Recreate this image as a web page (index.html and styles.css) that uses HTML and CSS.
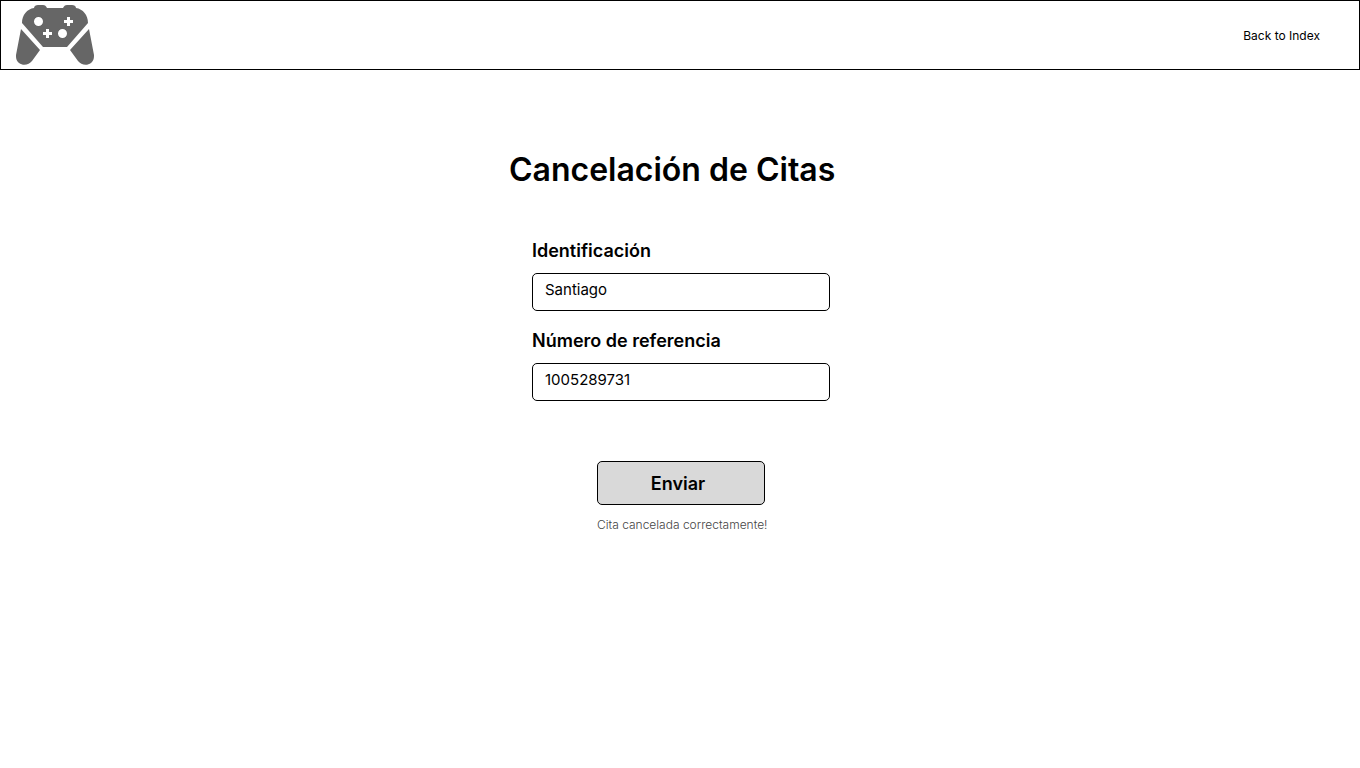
FILE: index.html
```html
<!DOCTYPE html>
<html lang="es">
<head>
<meta charset="utf-8">
<meta name="viewport" content="width=device-width, initial-scale=1">
<title>Cancelación de Citas</title>
<link rel="stylesheet" href="styles.css">
</head>
<body>
<header class="topbar">
  <svg class="logo" viewBox="0 0 78 60" aria-hidden="true">
    <path fill="#666" fill-rule="evenodd" d="M18 3C18 1 20 0 22 0H27C29 0 30 1 31 3H47C48 1 49 0 51 0H56C58 0 60 1 60 3C67 4 72 10 72 18L51 42H27L6 18C6 10 11 4 18 3ZM22.500 12a4.500 4.500 0 1 0 0 9a4.500 4.500 0 1 0 0-9ZM46.500 24a4.500 4.500 0 1 0 0 9a4.500 4.500 0 1 0 0-9ZM51 12H54V15H57V18H54V21H51V18H48V15H51ZM30 24H33V27H36V30H33V33H30V30H27V27H30Z"/>
    <path fill="#666" d="M5 24L24 45L16 56C13 60 7 61 3 58C0 55 0 53 0 50ZM73 24L54 45L62 56C65 60 71 61 75 58C78 55 78 53 78 50Z"/>
  </svg>
  <a class="back" href="#">Back to Index</a>
</header>
<main class="page">
  <h1 class="title">Cancelación de Citas</h1>
  <form class="form">
    <label class="label" for="ident">Identificación</label>
    <input class="field" id="ident" type="text" value="Santiago">
    <label class="label" for="ref">Número de referencia</label>
    <input class="field" id="ref" type="text" value="1005289731">
    <div class="actions">
      <button class="submit" type="button">Enviar</button>
      <p class="message" role="status">Cita cancelada correctamente!</p>
    </div>
  </form>
</main>
</body>
</html>
```
FILE: styles.css
```css
* { box-sizing: border-box; }
body {
  margin: 0;
  background: #fff;
  color: #000;
  font-family: Inter, "Liberation Sans", sans-serif;
}
.topbar {
  display: flex;
  align-items: center;
  justify-content: space-between;
  padding: 4px 39px 4px 15px;
  border: 1px solid #000;
}
.logo { width: 78px; height: 60px; }
.back {
  padding-top: 2px;
  color: #000;
  font-size: 12px;
  line-height: 16px;
  text-decoration: none;
}
.page {
  max-width: 344px;
  margin: 0 auto;
  padding-top: 80px;
}
.title {
  margin: 0;
  padding-left: 1px;
  font-size: 32px;
  font-weight: 600;
  line-height: 40px;
}
.form {
  display: flex;
  flex-direction: column;
  padding: 48px 22px 0 24px;
}
.label {
  margin-bottom: 10px;
  font-size: 18px;
  font-weight: 600;
  line-height: 25px;
}
.field {
  width: 100%;
  height: 38px;
  margin: 0 0 17px;
  padding: 0 12px 6px;
  border: 1px solid #000;
  border-radius: 5px;
  background: #fff;
  color: #000;
  font: 400 15px/20px Inter, "Liberation Sans", sans-serif;
}
.actions {
  width: 168px;
  margin: 43px auto 0;
}
.submit {
  width: 100%;
  height: 44px;
  padding: 2px 6px 0 0;
  border: 1px solid #000;
  border-radius: 5px;
  background: #d9d9d9;
  color: #000;
  font: 600 18px/24px Inter, "Liberation Sans", sans-serif;
}
.message {
  margin: 12px 0 0;
  color: #444;
  font-size: 12px;
  font-weight: 300;
  line-height: 16px;
  white-space: nowrap;
}
```
